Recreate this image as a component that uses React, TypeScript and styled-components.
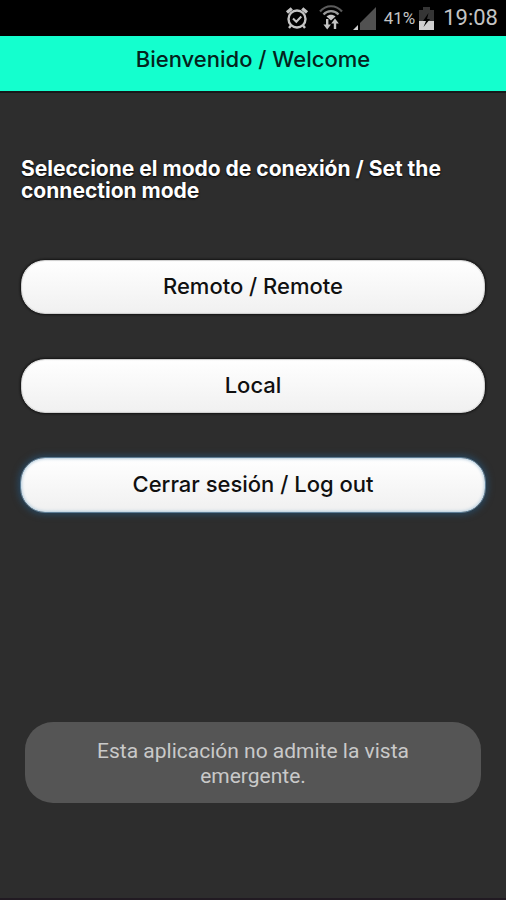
import React from 'react';
import styled, { createGlobalStyle } from 'styled-components';

const GlobalStyle = createGlobalStyle`
  * { box-sizing: border-box; }
  body { margin: 0; background: #2d2d2d; }
`;

const Screen = styled.div`
  display: flex;
  flex-direction: column;
  min-height: 100vh;
  background: #2d2d2d;
  border-bottom: 2px solid #211a22;
  font-family: Inter, sans-serif;
`;

const StatusBar = styled.div`
  display: flex;
  align-items: center;
  justify-content: flex-end;
  height: 36px;
  padding: 0 8px;
  background: #000;
  color: #c4c4c4;
  font-family: Roboto, sans-serif;
`;

const StatusIcon = styled.svg<{ $gap: number }>`
  flex: none;
  margin-right: ${({ $gap }) => $gap}px;
`;

const BatteryLevel = styled.span`
  margin-right: 4px;
  font-size: 17px;
`;

const Clock = styled.time`
  font-size: 22px;
  line-height: 36px;
`;

const Header = styled.header`
  height: 57px;
  padding-top: 10px;
  background: #14ffce;
  border-bottom: 2px solid #15191a;
  text-align: center;
`;

const Title = styled.h1`
  margin: 0;
  color: #04231d;
  font-size: 22px;
  font-weight: 500;
  line-height: 26px;
`;

const Content = styled.main`
  display: flex;
  flex-direction: column;
  padding: 65px 20px 0;
`;

const Prompt = styled.h2`
  margin: 0 0 57px;
  padding: 0 1px;
  color: #fff;
  font-size: 21px;
  font-weight: 700;
  line-height: 22px;
  text-shadow: 0 1px 2px #000;
`;

const ModeList = styled.div`
  display: flex;
  flex-direction: column;
  gap: 43px;
`;

const ModeButton = styled.button<{ $active?: boolean }>`
  width: 100%;
  height: 56px;
  padding: 0 16px 2px;
  border: 1px solid ${({ $active }) => ($active ? '#5d7d95' : '#1a1a1a')};
  border-radius: 25px;
  background: linear-gradient(#fff, #f0f0f0) padding-box;
  box-shadow: ${({ $active }) =>
    $active ? '0 0 6px 2px #28455c, inset 0 0 3px 1px #b3cbdc' : '0 0 2px #111, inset 0 0 1px 1px #ccc'};
  color: #101010;
  font-family: inherit;
  font-size: 22px;
  font-weight: 500;
  line-height: 26px;
`;

const Toast = styled.div`
  margin: auto 25px 95px;
  padding: 17px 60px 14px;
  border-radius: 28px;
  background: #555;
  color: #c9c9c9;
  font-family: Roboto, sans-serif;
  font-size: 21px;
  line-height: 25px;
  text-align: center;
`;

const AlarmIcon = () => (
  <StatusIcon $gap={10} width="24" height="24" viewBox="0 0 24 24" fill="none" stroke="#c4c4c4" aria-hidden="true">
    <circle cx="12" cy="13" r="8.5" strokeWidth="2.4" />
    <path d="M8 12.5l3.3 3.3 5-5.3" strokeWidth="2" />
    <path d="M2 6.5l4.8-4M22 6.5l-4.8-4" strokeWidth="3.4" />
    <path d="M6 19.5l-2 2.5M18 19.5l2 2.5" strokeWidth="2.4" />
  </StatusIcon>
);

const WifiIcon = () => (
  <StatusIcon $gap={10} width="24" height="26" viewBox="0 0 24 26" fill="none" aria-hidden="true">
    <path d="M1 6.5C7-.5 17-.5 23 6.5" stroke="#5c5c5c" strokeWidth="2.2" />
    <path d="M4.5 9.5c4-4.4 11-4.4 15 0" stroke="#999" strokeWidth="2.2" />
    <path d="M7.5 11.5c2.6-2.4 6.4-2.4 9 0L12 15.5z" fill="#c4c4c4" />
    <path
      d="M7 14h2.4v5.5H12L8.2 24.5 4.4 19.5H7zM14.8 24h2.4v-5.5h2.6L16 13.5l-3.8 5h2.6z"
      fill="#c4c4c4"
      stroke="#000"
      strokeWidth="1"
      paintOrder="stroke"
    />
  </StatusIcon>
);

const SignalIcon = () => (
  <StatusIcon $gap={8} width="23" height="23" viewBox="0 0 23 23" aria-hidden="true">
    <path d="M23 0v23H7v-7z" fill="#515151" />
    <path d="M5 18v5H0z" fill="#d0d0d0" />
  </StatusIcon>
);

const BatteryIcon = () => (
  <StatusIcon $gap={9} width="15" height="23" viewBox="0 0 15 23" aria-hidden="true">
    <path d="M4 0h7v3h4v20H0V3h4z" fill="#353535" />
    <path d="M0 14h15v9H0z" fill="#d0d0d0" />
    <path d="M9.5 6L4 14h3l-2.5 6L11 12H8z" fill="#000" />
  </StatusIcon>
);

const modes = [
  { label: 'Remoto / Remote' },
  { label: 'Local' },
  { label: 'Cerrar sesión / Log out', active: true },
];

export default function App() {
  return (
    <>
      <GlobalStyle />
      <Screen>
        <StatusBar>
          <AlarmIcon />
          <WifiIcon />
          <SignalIcon />
          <BatteryLevel>41%</BatteryLevel>
          <BatteryIcon />
          <Clock>19:08</Clock>
        </StatusBar>
        <Header>
          <Title>Bienvenido / Welcome</Title>
        </Header>
        <Content>
          <Prompt>Seleccione el modo de conexión / Set the connection mode</Prompt>
          <ModeList>
            {modes.map(({ label, active }) => (
              <ModeButton key={label} type="button" $active={active}>
                {label}
              </ModeButton>
            ))}
          </ModeList>
        </Content>
        <Toast role="status">Esta aplicación no admite la vista emergente.</Toast>
      </Screen>
    </>
  );
}
